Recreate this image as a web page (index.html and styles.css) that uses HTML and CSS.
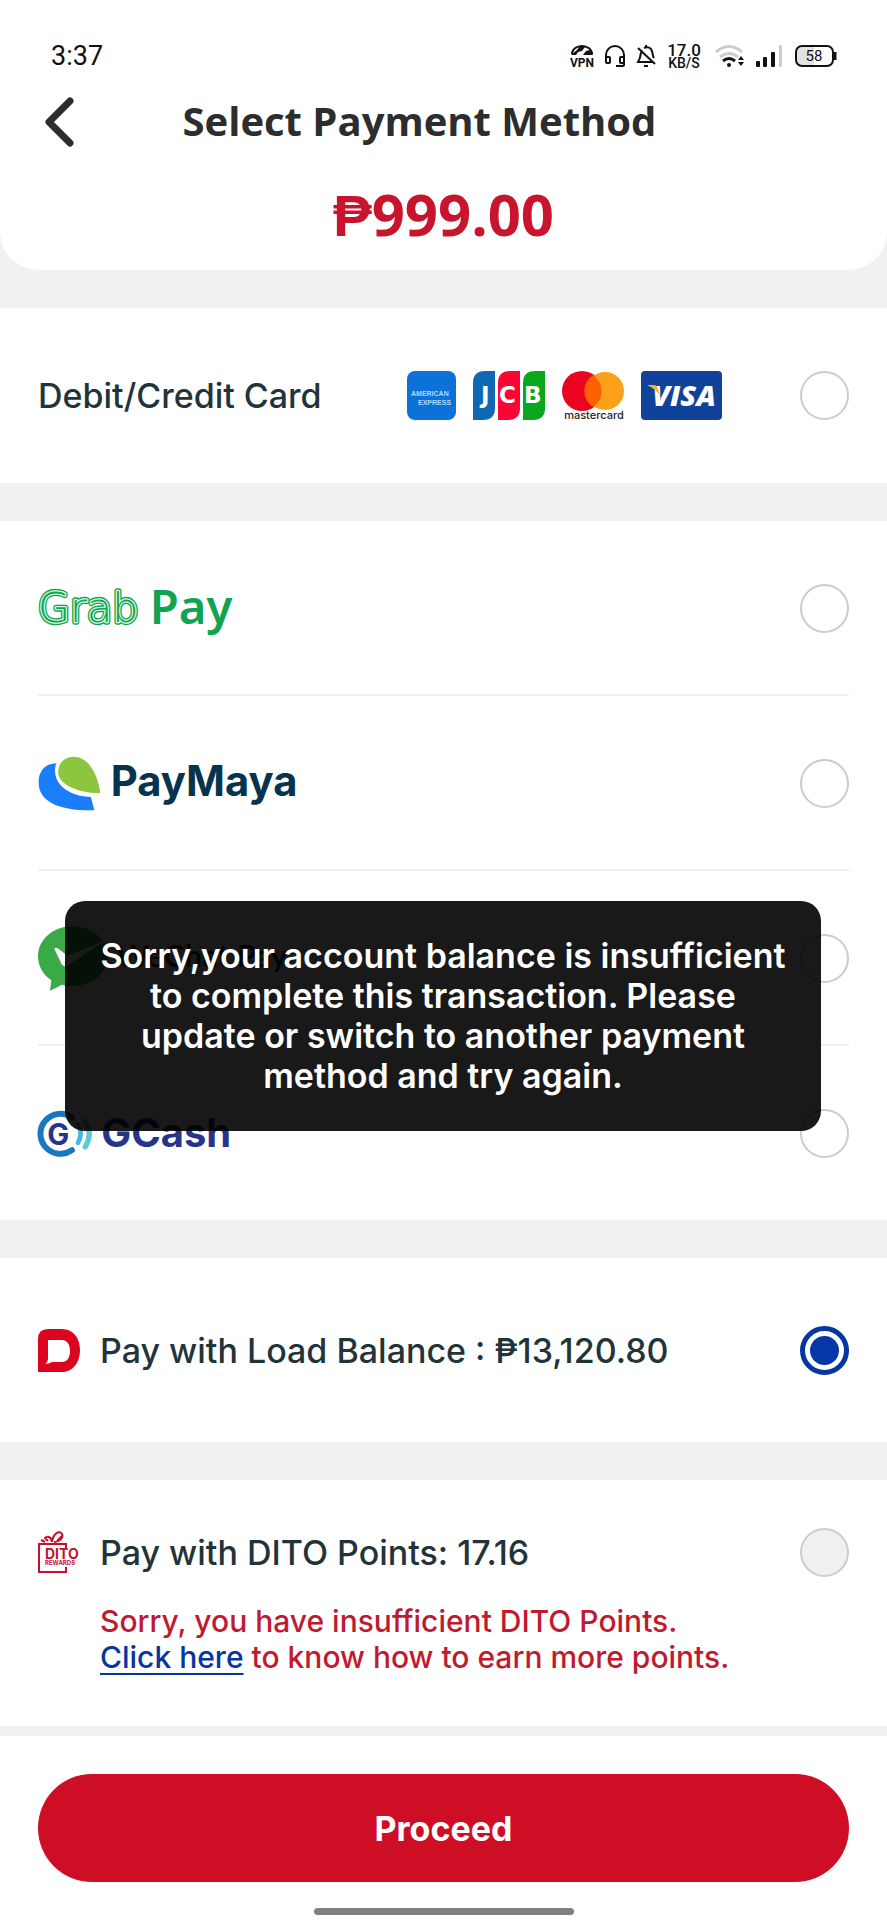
FILE: index.html
```html
<!DOCTYPE html>
<html lang="en">
<head>
    <meta charset="UTF-8">
    <meta name="viewport" content="width=device-width, initial-scale=1.0">
    <title>Select Payment Method</title>
    <link rel="stylesheet" href="styles.css">
</head>
<body>
    <header class="header">
        <div class="status-bar">
            <span class="clock">3:37</span>
            <div class="status-icons">
                <svg width="24" height="24" viewBox="0 0 24 24">
                    <path d="M2 10a10 8 0 0 1 20 0" fill="none" stroke="#111" stroke-width="2"/>
                    <path d="M1 11L7 6l3-4 5 1-3 4-4 1-2 3zM13 11l3-4 4-1 3 5z" fill="#111"/>
                    <text x="12" y="23" text-anchor="middle" class="vpn-text">VPN</text>
                </svg>
                <svg width="22" height="24" viewBox="0 0 22 24" fill="none" stroke="#111" stroke-width="2">
                    <path d="M2 15v-4a9 9 0 0 1 18 0v10q0 1-1 1h-7"/>
                    <rect x="2" y="13" width="4" height="6" rx="1"/>
                    <rect x="16" y="13" width="4" height="6" rx="1"/>
                </svg>
                <svg width="22" height="24" viewBox="0 0 22 24" fill="none" stroke="#111" stroke-width="2">
                    <path d="M6 6C4 9 5 13 3 16l-1 2h15M8 4q4-2 7 1c2 3 1 6 3 9M10 1v3M2 4l17 16M8 22h4"/>
                </svg>
                <div class="net-speed"><span class="speed">17.0</span><span class="unit">KB/S</span></div>
                <svg width="36" height="24" viewBox="0 0 36 24" fill="none" stroke-width="3">
                    <path d="M6 8q13-11 26 0M10 13q9-7 18 0" stroke="#ccc"/>
                    <path d="M13 17q6-5 12 0" stroke="#111"/>
                    <circle cx="19" cy="21" r="2" fill="#111"/>
                    <path d="M28 16l3-4 3 4zM28 18l3 4 3-4z" fill="#111"/>
                </svg>
                <svg width="26" height="24" viewBox="0 0 26 24">
                    <rect x="0" y="17" width="4" height="6" rx="1" fill="#111"/>
                    <rect x="7" y="13" width="4" height="10" rx="1" fill="#111"/>
                    <rect x="15" y="8" width="4" height="15" rx="1" fill="#111"/>
                    <rect x="23" y="1" width="3" height="22" rx="1" fill="#ccc"/>
                </svg>
                <svg width="45" height="24" viewBox="0 0 45 24">
                    <path d="M10 2h12v20H10q-6 0-6-6V8q0-6 6-6z" fill="#e2e2e2"/>
                    <rect x="4" y="2" width="37" height="20" rx="6" fill="none" stroke="#111" stroke-width="2"/>
                    <path d="M43 8v8" stroke="#111" stroke-width="3"/>
                    <text x="22" y="17" text-anchor="middle" class="battery-text">58</text>
                </svg>
            </div>
        </div>
        <nav class="nav">
            <button class="back-button" aria-label="Back">
                <svg width="38" height="54" viewBox="0 0 38 54" fill="none" stroke="#2d2d2d" stroke-width="7" stroke-linecap="round" stroke-linejoin="round">
                    <path d="M32 7L11 28l21 21"/>
                </svg>
            </button>
            <h1>Select Payment Method</h1>
        </nav>
        <div class="amount">₱999.00</div>
    </header>

    <main>
        <section class="section">
            <label class="option">
                <span>Debit/Credit Card</span>
                <span class="card-brands">
                    <svg width="49" height="49" viewBox="0 0 49 49">
                        <rect width="49" height="49" rx="8" fill="#0a72d8"/>
                        <text x="4" y="25" class="amex-text">AMERICAN</text>
                        <text x="11" y="34" class="amex-text">EXPRESS</text>
                    </svg>
                    <svg width="72" height="49" viewBox="0 0 72 49">
                        <path d="M12 0h10v37q0 12-12 12H0V12Q0 0 12 0z" fill="#0f68b4"/>
                        <path d="M37 0h10v37q0 12-12 12H25V12Q25 0 37 0z" fill="#fa0535"/>
                        <path d="M62 0h10v37q0 12-12 12H50V12Q50 0 62 0z" fill="#09a81c"/>
                        <text x="8" y="32" class="jcb-text">J</text>
                        <text x="26" y="32" class="jcb-text">C</text>
                        <text x="51" y="32" class="jcb-text">B</text>
                    </svg>
                    <svg width="62" height="49" viewBox="0 0 62 49">
                        <circle cx="20" cy="20" r="20" fill="#eb0420"/>
                        <circle cx="43" cy="20" r="19" fill="#faa019"/>
                        <path d="M31 4a19 19 0 0 1 0 32a19 19 0 0 1 0-32z" fill="#ff6000"/>
                        <text x="32" y="48" text-anchor="middle" class="mc-text">mastercard</text>
                    </svg>
                    <svg width="81" height="49" viewBox="0 0 81 49">
                        <rect width="81" height="49" rx="4" fill="#10429a"/>
                        <text x="43" y="35" text-anchor="middle" class="visa-text">VISA</text>
                        <path d="M6 14h7q3 0 4 4l2 7q-4-7-13-11z" fill="#f0b52c"/>
                    </svg>
                </span>
                <input type="radio" name="method" value="card">
            </label>
        </section>

        <section class="section wallets">
            <label class="option">
                <svg width="193" height="52" viewBox="54 66 580 156" role="img" aria-label="GrabPay">
                    <g class="grab-text">
                        <text x="54" y="182" stroke="#12a350" stroke-width="16">Grab</text>
                        <text x="54" y="182" stroke="#d5fbe2" stroke-width="8">Grab</text>
                        <text x="54" y="182" fill="#12a350">Grab</text>
                    </g>
                    <text x="390" y="190" class="grab-pay-text">Pay</text>
                </svg>
                <input type="radio" name="method" value="grabpay">
            </label>
            <label class="option">
                <svg width="257" height="55" viewBox="54 586 772 166" role="img" aria-label="PayMaya">
                    <path d="M108 608C72 608 54 634 54 665C54 722 112 752 222 750L212 710C150 708 106 676 104 636C103 625 104 616 108 608z" fill="#1a7dfa"/>
                    <path d="M160 588C202 588 232 636 240 698C178 698 113 674 113 634C113 608 132 588 160 588z" fill="#8cc63e"/>
                    <text x="272" y="706" class="maya-text">PayMaya</text>
                </svg>
                <input type="radio" name="method" value="paymaya">
            </label>
            <label class="option">
                <svg width="257" height="65" viewBox="54 142 772 194" role="img" aria-label="WeChat Pay">
                    <path d="M158 142c58 0 106 40 106 90s-48 90-106 90c-12 0-22-1-32-4l-36 18 4-32C70 288 54 262 54 232c0-50 46-90 104-90z" fill="#3aaa47"/>
                    <path d="M103 210q4-6 12 0l22 16q8 4 18 0l106-44-118 78q-10 6-18-4z" fill="#fff"/>
                    <text x="290" y="265" class="wechat-text">WeChat Pay</text>
                </svg>
                <input type="radio" name="method" value="wechat">
            </label>
            <label class="option">
                <svg width="193" height="47" viewBox="54 686 580 140" role="img" aria-label="GCash">
                    <path d="M156 708A60 60 0 1 0 156 806" fill="none" stroke="#1878bd" stroke-width="18" stroke-linecap="round"/>
                    <text x="82" y="791" class="gcash-mark">G</text>
                    <path d="M174 730q16 26 0 54" fill="none" stroke="#45b5e8" stroke-width="14" stroke-linecap="round"/>
                    <path d="M196 718q24 38 0 78" fill="none" stroke="#58ccd6" stroke-width="16" stroke-linecap="round"/>
                    <text x="244" y="796" class="gcash-text">GCash</text>
                </svg>
                <input type="radio" name="method" value="gcash">
            </label>

            <div class="toast" role="alert">
                Sorry,your account balance is insufficient<br>
                to complete this transaction. Please<br>
                update or switch to another payment<br>
                method and try again.
            </div>
        </section>

        <section class="section load">
            <label class="option">
                <svg width="42" height="43" viewBox="0 0 42 43">
                    <path d="M10 0h14c11 0 18 9 18 21s-7 22-18 22H0V10Q0 0 10 0z" fill="#dc0520"/>
                    <path d="M10 11h14c5 0 8 4 8 11s-3 11-8 11H14q-3 2-7 2 3-2 3-6z" fill="#fff"/>
                </svg>
                <span>Pay with Load Balance : ₱13,120.80</span>
                <input type="radio" name="method" value="load" checked>
            </label>
        </section>

        <section class="section points">
            <label class="option">
                <svg width="42" height="43" viewBox="0 0 42 43" fill="none" stroke="#c8102e">
                    <path d="M28 17v-4H1v28h27v-5" stroke-width="2"/>
                    <path d="M14 11c-1-6-5-6-7-4l3 3M14 11C15 2 22-1 24 3s-3 8-8 8M19 10l5-5M3 9l4 2" stroke-width="2"/>
                    <text x="7" y="28" class="dito-text">DITO</text>
                    <text x="7" y="34" class="rewards-text">REWARDS</text>
                </svg>
                <span>Pay with DITO Points: 17.16</span>
                <input type="radio" name="method" value="points" disabled>
            </label>
            <p class="error">
                Sorry, you have insufficient DITO Points.<br>
                <a href="#">Click here</a> to know how to earn more points.
            </p>
        </section>
    </main>

    <footer class="footer">
        <button class="proceed-button">Proceed</button>
        <div class="home-bar"></div>
    </footer>
</body>
</html>
```
FILE: styles.css
```css
* {
    box-sizing: border-box;
}
body {
    margin: 0;
    background-color: #f1f1f1;
    font-family: Inter, "Noto Sans", sans-serif;
    color: #22343a;
}
svg {
    display: block;
    flex-shrink: 0;
    overflow: visible;
}
button {
    border: none;
    cursor: pointer;
}
.header {
    background-color: #fff;
    border-radius: 0 0 38px 38px;
    padding-bottom: 24px;
    margin-bottom: 38px;
}
.status-bar {
    display: flex;
    justify-content: space-between;
    align-items: center;
    height: 72px;
    padding: 40px 50px 0 51px;
    color: #111;
    font-family: Roboto, sans-serif;
}
.clock {
    font-size: 27px;
    font-weight: 400;
}
.status-icons {
    display: flex;
    align-items: center;
    gap: 10px;
}
.net-speed {
    display: flex;
    flex-direction: column;
    align-items: center;
    width: 32px;
    font-weight: 500;
}
.speed {
    font-size: 17px;
    line-height: 14px;
}
.unit {
    font-size: 14px;
    line-height: 12px;
}
.vpn-text {
    font-size: 12px;
    font-weight: 700;
    fill: #111;
}
.battery-text {
    font-size: 15px;
    fill: #111;
}
.nav {
    display: flex;
    align-items: center;
    padding: 0 124px 0 38px;
    margin-top: 20px;
}
.back-button {
    width: 38px;
    padding: 0;
    background: none;
}
h1 {
    flex: 1;
    margin: 0;
    font-family: "Open Sans", sans-serif;
    font-size: 40px;
    line-height: 58px;
    text-align: center;
    white-space: nowrap;
    color: #2d2d2d;
}
.amount {
    margin-top: 32px;
    font-family: "Open Sans", sans-serif;
    font-size: 58px;
    font-weight: 700;
    line-height: 64px;
    text-align: center;
    color: #c8142d;
}
.section {
    background-color: #fff;
    padding: 0 38px;
    margin-bottom: 38px;
}
.option {
    display: flex;
    align-items: center;
    gap: 20px;
    height: 175px;
    font-size: 34px;
    font-weight: 500;
    cursor: pointer;
}
.option input {
    appearance: none;
    flex-shrink: 0;
    width: 49px;
    height: 49px;
    margin: 0 0 0 auto;
    border: 2px solid #ccc;
    border-radius: 50%;
    background-color: #fff;
}
.option input:checked {
    border: 5px solid #0636a0;
    padding: 5px;
    background-color: #0636a8;
    background-clip: content-box;
}
.option input:disabled {
    background-color: #f0f0f0;
}
.card-brands {
    display: flex;
    gap: 17px;
    margin: 0 58px 0 auto;
}
.card-brands + input {
    margin-left: 0;
}
.amex-text {
    font: bold 7px "Liberation Sans", sans-serif;
    fill: #b5d8f7;
}
.jcb-text {
    font: bold 23px "DejaVu Sans", sans-serif;
    fill: #fff;
}
.mc-text {
    font: 500 11px Inter, sans-serif;
    fill: #222;
}
.visa-text {
    font: italic 800 29px "Open Sans", sans-serif;
    fill: #fff;
}
.wallets {
    position: relative;
}
.wallets .option {
    padding-top: 2px;
    border-bottom: 2px solid #f0f0f0;
}
.wallets .option:nth-child(4) {
    height: 174px;
    padding-top: 0;
    border-bottom: none;
}
.grab-text {
    font: 200 124px "DejaVu Sans", sans-serif;
    fill: none;
    stroke-linejoin: round;
}
.grab-pay-text {
    font: 600 142px "Noto Sans", sans-serif;
    fill: #12a350;
}
.maya-text {
    font: 700 126px Inter, sans-serif;
    fill: #06344c;
}
.wechat-text {
    font: 600 94px Lato, sans-serif;
    fill: #222;
}
.gcash-mark {
    font: 700 88px Inter, sans-serif;
    fill: #26348b;
}
.gcash-text {
    font: 700 120px Inter, sans-serif;
    fill: #26348b;
}
.toast {
    position: absolute;
    top: 380px;
    left: 65px;
    right: 66px;
    padding: 35px 0;
    border-radius: 20px;
    background-color: rgba(0, 0, 0, 0.9);
    color: #fff;
    font-size: 34px;
    font-weight: 600;
    line-height: 40px;
    text-align: center;
    white-space: nowrap;
}
.load .option {
    height: 184px;
}
.points {
    margin-bottom: 10px;
    padding-bottom: 51px;
}
.points .option {
    height: 123px;
    padding-top: 21px;
}
.error {
    margin: 0 0 0 62px;
    font-size: 30px;
    font-weight: 500;
    line-height: 36px;
    color: #c01a30;
}
.error a {
    color: #0636a0;
    text-decoration-thickness: 2px;
    text-underline-offset: 5px;
}
.dito-text {
    font: 700 14px Inter, sans-serif;
    fill: #c8102e;
    stroke: none;
}
.rewards-text {
    font: 700 6px Inter, sans-serif;
    fill: #c8102e;
    stroke: none;
}
.footer {
    background-color: #fff;
    padding: 38px 38px 5px;
}
.proceed-button {
    width: 100%;
    height: 108px;
    border-radius: 54px;
    background-color: #ce0e24;
    color: #fff;
    font-family: inherit;
    font-size: 34px;
    font-weight: 700;
}
.home-bar {
    width: 260px;
    height: 7px;
    margin: 26px auto 0;
    border-radius: 4px;
    background-color: #808080;
}
```
